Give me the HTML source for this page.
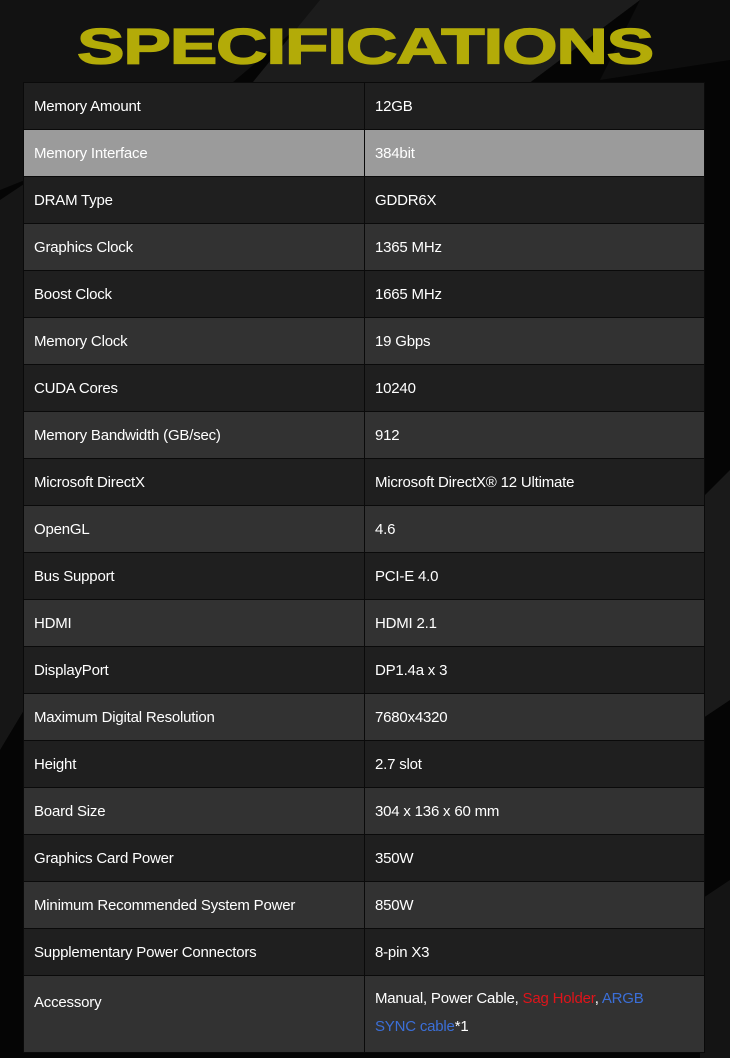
<!DOCTYPE html>
<html><head><meta charset="utf-8"><style>
*{margin:0;padding:0;box-sizing:border-box}
body{width:730px;height:1058px;background:#050505;position:relative;overflow:hidden;font-family:"Liberation Sans",Arial,sans-serif}
.bg{position:absolute;inset:0}
h1{position:absolute;left:77px;top:23px;height:56px;color:#b3ab08;font-size:58px;font-weight:bold;line-height:56px;letter-spacing:-1px;white-space:nowrap;transform-origin:left top;transform:scaleX(1.23) scaleY(0.86);-webkit-text-stroke:1.5px #b3ab08}
table{position:absolute;left:23px;top:82px;width:682px;border-collapse:collapse}
td{height:47px;border:1px solid #0a0a0a;color:#fff;font-size:15px;padding:0 0 0 10px;vertical-align:middle;letter-spacing:-0.2px}
td:first-child{width:341px}
tr:nth-child(odd) td{background:#1f1f1f}
tr:nth-child(even) td{background:#323232}
tr.hl td{background:#9b9b9b}
tr.acc td{height:77px;vertical-align:top;padding-top:13px;line-height:28px}
tr.acc td:last-child{padding-top:9px}
.r{color:#e0141a}.b{color:#3b6fd8}
</style></head><body>
<svg class="bg" width="730" height="1058">
<polygon points="0,0 330,0 200,110 0,190" fill="#121212"/>
<polygon points="320,0 640,0 520,90 230,110" fill="#1c1c1c"/>
<polygon points="640,0 730,0 730,60 600,80" fill="#0e0e0e"/>
<polygon points="0,200 30,180 30,700 0,750" fill="#161616"/>
<polygon points="700,500 730,470 730,700 700,720" fill="#1a1a1a"/>
<polygon points="700,900 730,880 730,1058 700,1058" fill="#141414"/>
</svg>
<h1>SPECIFICATIONS</h1>
<table>
<tr><td>Memory Amount</td><td>12GB</td></tr>
<tr class="hl"><td>Memory Interface</td><td>384bit</td></tr>
<tr><td>DRAM Type</td><td>GDDR6X</td></tr>
<tr><td>Graphics Clock</td><td>1365 MHz</td></tr>
<tr><td>Boost Clock</td><td>1665 MHz</td></tr>
<tr><td>Memory Clock</td><td>19 Gbps</td></tr>
<tr><td>CUDA Cores</td><td>10240</td></tr>
<tr><td>Memory Bandwidth (GB/sec)</td><td>912</td></tr>
<tr><td>Microsoft DirectX</td><td>Microsoft DirectX® 12 Ultimate</td></tr>
<tr><td>OpenGL</td><td>4.6</td></tr>
<tr><td>Bus Support</td><td>PCI-E 4.0</td></tr>
<tr><td>HDMI</td><td>HDMI 2.1</td></tr>
<tr><td>DisplayPort</td><td>DP1.4a x 3</td></tr>
<tr><td>Maximum Digital Resolution</td><td>7680x4320</td></tr>
<tr><td>Height</td><td>2.7 slot</td></tr>
<tr><td>Board Size</td><td>304 x 136 x 60 mm</td></tr>
<tr><td>Graphics Card Power</td><td>350W</td></tr>
<tr><td>Minimum Recommended System Power</td><td>850W</td></tr>
<tr><td>Supplementary Power Connectors</td><td>8-pin X3</td></tr>
<tr class="acc"><td>Accessory</td><td>Manual, Power Cable, <span class="r">Sag Holder</span>, <span class="b">ARGB<br>SYNC cable</span>*1</td></tr>
</table>
</body></html>
